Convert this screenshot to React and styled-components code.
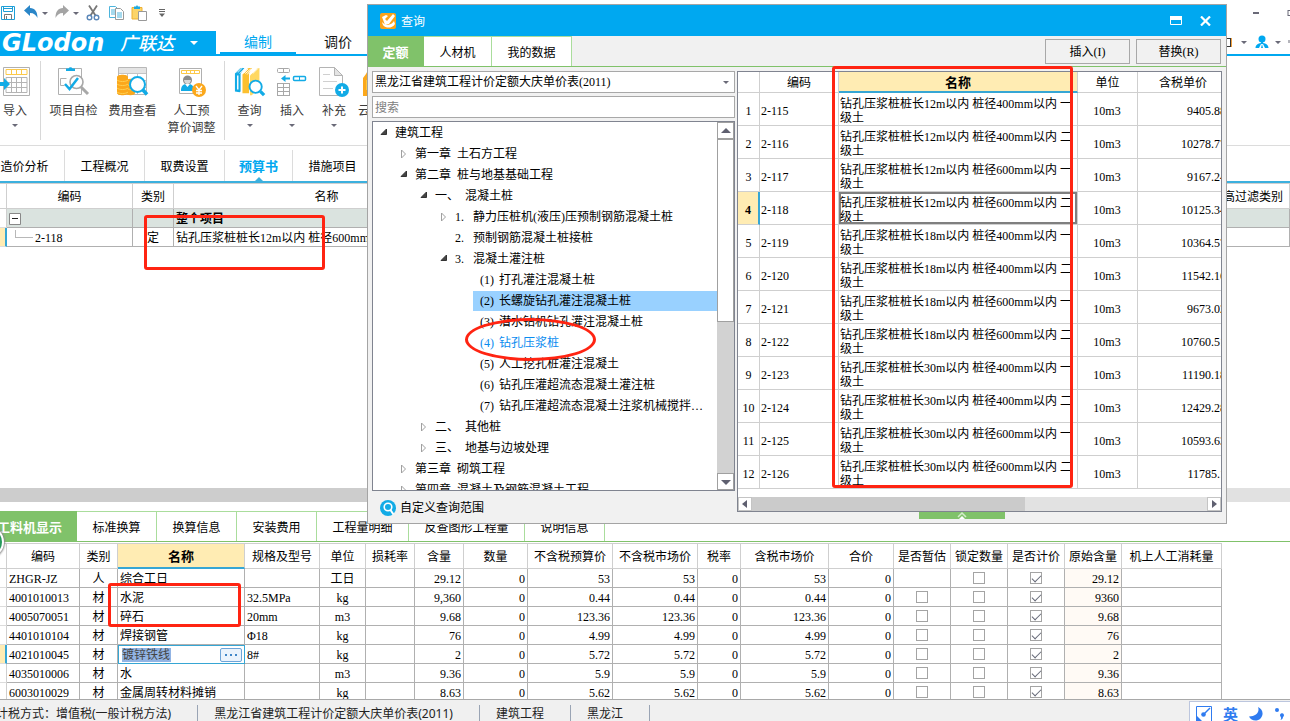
import React from 'react';
import styled, { createGlobalStyle, css } from 'styled-components';

const SONG = '"Liberation Serif", "Noto Sans CJK SC", serif';
const HEI = '"Noto Sans", "Noto Sans CJK SC", sans-serif';

const BLUE = '#00a8f0';
const GREEN = '#80c26a';

const docTabs = [
  { label: '造价分析', width: 80 },
  { label: '工程概况', width: 80 },
  { label: '取费设置', width: 80 },
  { label: '预算书', width: 68, active: true },
  { label: '措施项目', width: 80 },
];

const detailTabs = [
  { label: '工料机显示', width: 94, active: true },
  { label: '标准换算', width: 80 },
  { label: '换算信息', width: 80 },
  { label: '安装费用', width: 80 },
  { label: '工程量明细', width: 92 },
  { label: '反查图形工程量', width: 116 },
  { label: '说明信息', width: 80 },
];

const detailColumns = [
  { label: '', width: 7 },
  { label: '编码', width: 73 },
  { label: '类别', width: 38 },
  { label: '名称', width: 127, active: true },
  { label: '规格及型号', width: 75 },
  { label: '单位', width: 46 },
  { label: '损耗率', width: 49 },
  { label: '含量', width: 49 },
  { label: '数量', width: 64 },
  { label: '不含税预算价', width: 85 },
  { label: '不含税市场价', width: 85 },
  { label: '税率', width: 43 },
  { label: '含税市场价', width: 88 },
  { label: '合价', width: 65 },
  { label: '是否暂估', width: 57 },
  { label: '锁定数量', width: 57 },
  { label: '是否计价', width: 57 },
  { label: '原始含量', width: 57 },
  { label: '机上人工消耗量', width: 100 },
];

const materials = [
  { code: 'ZHGR-JZ', type: '人', name: '综合工日', spec: '', unit: '工日', amount: '29.12', price: '53', origin: '29.12', noEstimate: true },
  { code: '4001010013', type: '材', name: '水泥', spec: '32.5MPa', unit: 'kg', amount: '9,360', price: '0.44', origin: '9360' },
  { code: '4005070051', type: '材', name: '碎石', spec: '20mm', unit: 'm3', amount: '9.68', price: '123.36', origin: '9.68' },
  { code: '4401010104', type: '材', name: '焊接钢管', spec: 'Φ18', unit: 'kg', amount: '76', price: '4.99', origin: '76' },
  { code: '4021010045', type: '材', name: '镀锌铁线', spec: '8#', unit: 'kg', amount: '2', price: '5.72', origin: '2', editing: true },
  { code: '4035010006', type: '材', name: '水', spec: '', unit: 'm3', amount: '9.36', price: '5.9', origin: '9.36' },
  { code: '6003010029', type: '材', name: '金属周转材料摊销', spec: '', unit: 'kg', amount: '8.63', price: '5.62', origin: '8.63' },
];

const tree = [
  { level: 0, state: 'open', label: '建筑工程' },
  { level: 1, state: 'closed', no: '第一章', label: '土石方工程' },
  { level: 1, state: 'open', no: '第二章', label: '桩与地基基础工程' },
  { level: 2, state: 'open', no: '一、', label: '混凝土桩' },
  { level: 3, state: 'closed', no: '1.', label: '静力压桩机(液压)压预制钢筋混凝土桩' },
  { level: 3, no: '2.', label: '预制钢筋混凝土桩接桩' },
  { level: 3, state: 'open', no: '3.', label: '混凝土灌注桩' },
  { level: 4, no: '(1)', label: '打孔灌注混凝土桩' },
  { level: 4, no: '(2)', label: '长螺旋钻孔灌注混凝土桩', selected: true },
  { level: 4, no: '(3)', label: '潜水钻机钻孔灌注混凝土桩' },
  { level: 4, no: '(4)', label: '钻孔压浆桩', current: true },
  { level: 4, no: '(5)', label: '人工挖孔桩灌注混凝土' },
  { level: 4, no: '(6)', label: '钻孔压灌超流态混凝土灌注桩' },
  { level: 4, no: '(7)', label: '钻孔压灌超流态混凝土注浆机械搅拌…' },
  { level: 2, state: 'closed', no: '二、', label: '其他桩' },
  { level: 2, state: 'closed', no: '三、', label: '地基与边坡处理' },
  { level: 1, state: 'closed', no: '第三章', label: '砌筑工程' },
  { level: 1, state: 'closed', no: '第四章', label: '混凝土及钢筋混凝土工程' },
];

const noWidths = [0, 42, 30, 18, 24];

const quotas = [
  ['2-115', 12, 400, '一', '9405.88'],
  ['2-116', 12, 400, '二', '10278.77'],
  ['2-117', 12, 600, '一', '9167.24'],
  ['2-118', 12, 600, '二', '10125.34'],
  ['2-119', 18, 400, '一', '10364.57'],
  ['2-120', 18, 400, '二', '11542.16'],
  ['2-121', 18, 600, '一', '9673.02'],
  ['2-122', 18, 600, '二', '10760.51'],
  ['2-123', 30, 400, '一', '11190.18'],
  ['2-124', 30, 400, '二', '12429.28'],
  ['2-125', 30, 600, '一', '10593.63'],
  ['2-126', 30, 600, '二', '11785.1'],
];

const App = () => (
  <Window>
    <GlobalStyle />
    <QuickBar />
    <BrandBar />
    <Ribbon />
    <DocTabs>
      {docTabs.map(({ label, width, active }) => (
        <DocTab key={label} $width={width} $active={active}>
          {label}
        </DocTab>
      ))}
    </DocTabs>
    <BudgetGrid />
    <HScroll>
      <HScrollThumb />
    </HScroll>
    <DetailTabs>
      {detailTabs.map(({ label, width, active }) => (
        <DetailTab key={label} $width={width} $active={active}>
          {label}
        </DetailTab>
      ))}
    </DetailTabs>
    <MaterialGrid />
    <StatusBar />
    <FloatBall />
    <QueryDialog />
    <MarkBox $left={144} $top={215} $width={181} $height={55} />
    <MarkBox $left={832} $top={66} $width={241} $height={422} />
    <MarkBox $left={108} $top={583} $width={133} $height={44} />
    <MarkRing />
  </Window>
);

export default App;

const QuickBar = () => (
  <QuickBarWrap>
    <QuickTools>
      <IconButton aria-label="保存">
        <svg width="16" height="16" viewBox="0 0 16 16" fill="none" stroke="#1e9fd8">
          <path d="M1.5 1.5h13v13h-13z" />
          <path d="M3.5 1.5v5h9v-5M3.5 3.5h9" />
          <path d="M4.5 14.5v-5h7v5" stroke="#777" />
          <path d="M6.5 11v3" stroke="#777" />
        </svg>
      </IconButton>
      <ToolGroup>
        <IconButton aria-label="撤销">
          <svg width="16" height="16" viewBox="0 0 16 16">
            <path d="M1 5.500 L7 0v3c5 .2 7.500 3.500 7.500 10-1.500-3-3.500-5-7.500-5V11z" fill="#2a86c8" />
          </svg>
        </IconButton>
        <CaretButton aria-label="撤销列表"><Caret /></CaretButton>
      </ToolGroup>
      <ToolGroup>
        <IconButton aria-label="恢复">
          <svg width="16" height="16" viewBox="0 0 16 16">
            <path d="M15 5.500 L9 0v3c-5 .2-7.500 3.500-7.500 10 1.500-3 3.500-5 7.500-5V11z" fill="#a4a4a4" />
          </svg>
        </IconButton>
        <CaretButton aria-label="恢复列表"><Caret /></CaretButton>
      </ToolGroup>
      <IconButton aria-label="剪切">
        <svg width="16" height="16" viewBox="0 0 16 16" fill="none">
          <path d="M4 .5 10.500 10.500M12 .5 5.500 10.500" stroke="#777" strokeWidth="1.800" />
          <circle cx="4.500" cy="12.500" r="2.300" stroke="#5a86b8" strokeWidth="1.400" />
          <circle cx="11.500" cy="12.500" r="2.300" stroke="#5a86b8" strokeWidth="1.400" />
        </svg>
      </IconButton>
      <IconButton aria-label="复制">
        <svg width="16" height="16" viewBox="0 0 16 16" fill="#fff">
          <path d="M1.500 1.500h6l2 2v9h-8z" stroke="#4db4dc" />
          <path d="M3 5h4M3 7h4M3 9h4" stroke="#4db4dc" />
          <path d="M7.500 3.500h5l3 3v8h-8z" stroke="#999" />
          <path d="M9 8h5M9 10h5M9 12h5" stroke="#4db4dc" />
        </svg>
      </IconButton>
      <IconButton aria-label="粘贴">
        <svg width="16" height="16" viewBox="0 0 16 16">
          <path d="M1 2.500h10V14H1z" fill="#fcd468" stroke="#eeb032" />
          <path d="M3 1.500h2L6 0l1 1.500h2V4H3z" fill="#1ea9e0" />
          <path d="M7.500 6.500h8v9h-8z" fill="#fff" stroke="#999" />
        </svg>
      </IconButton>
      <IconButton aria-label="更多">
        <svg width="6" height="8" viewBox="0 0 6 8">
          <path d="M0 .5h6M0 2.500h6" stroke="#666" />
          <path d="M0 4.500h6L3 8z" fill="#666" />
        </svg>
      </IconButton>
    </QuickTools>
    <WindowTools>
      <svg width="38" height="10" viewBox="0 0 38 10" fill="none" stroke="#6a6a78">
        <path d="M1 4h6" strokeWidth="2" />
        <path d="M36 1v6M36 1.500h2M36 6.500h2" />
      </svg>
    </WindowTools>
  </QuickBarWrap>
);

const BrandBar = () => (
  <BrandBarWrap>
    <Brand>
      <BrandLatin>GLodon</BrandLatin>
      <BrandName>广联达</BrandName>
      <Caret $color="#fff" $size={4} />
    </Brand>
    <RibbonTab $active>编制</RibbonTab>
    <RibbonTab>调价</RibbonTab>
    <BrandRight>
      <svg width="64" height="16" viewBox="0 0 64 16">
        <path d="M0 3.500h4M0 11.500h4M4.500 3v9" fill="none" stroke="#333" />
        <path d="M5.500 3v9" stroke="#f0a040" />
        <path d="M15 6h6l-3 3zM49 6h6l-3 3z" fill="#6a6a78" />
        <circle cx="36" cy="4" r="3.500" fill={BLUE} />
        <path d="M35 6h2v2c3 .5 5.500 2 5.500 5H39l-2-4h-2l-2 4h-3.500c0-3 2.500-4.500 5.500-5z" fill={BLUE} />
        <path d="M36 9l1 4h-2z" fill={BLUE} />
        <path d="M63 5v3" stroke="#6a6a78" />
      </svg>
    </BrandRight>
  </BrandBarWrap>
);

const Ribbon = () => (
  <RibbonWrap>
    <RibbonGroup $first>
      <RibbonButton $width={50}>
        <ImportIcon />
        导入
        <Caret />
      </RibbonButton>
    </RibbonGroup>
    <RibbonGroup>
      <RibbonButton $width={59}>
        <CheckIcon />
        项目自检
      </RibbonButton>
      <RibbonButton $width={59}>
        <FeeIcon />
        费用查看
      </RibbonButton>
      <RibbonButton $width={59}>
        <LaborIcon />
        人工预
        <br />
        算价调整
      </RibbonButton>
    </RibbonGroup>
    <RibbonGroup>
      <RibbonButton $width={43}>
        <BooksIcon />
        查询
        <Caret />
      </RibbonButton>
      <RibbonButton $width={42}>
        <InsertIcon />
        插入
        <Caret />
      </RibbonButton>
      <RibbonButton $width={42}>
        <SupplementIcon />
        补充
        <Caret />
      </RibbonButton>
      <RibbonButton $width={42}>
        <CloudIcon />
        云检查
      </RibbonButton>
    </RibbonGroup>
  </RibbonWrap>
);

const ImportIcon = () => (
  <svg width="32" height="32" viewBox="0 0 32 32" fill="none">
    <path d="M4.500 1.500h26v28h-26z" stroke="#b0b0b0" />
    <path d="M7 3.500h21v5H7zM12.500 3v6M17.500 3v6M22.500 3v6" stroke="#fcc94a" />
    <path d="M7 11.500h21v15H7zM7 16.500h21M7 21.500h21M12.500 11v16M17.500 11v16M22.500 11v16" stroke="#b4b4b4" />
    <path d="M0 16h5v-4l6 6-6 6v-4H0z" fill="#12abe6" />
  </svg>
);

const CheckIcon = () => (
  <svg width="32" height="32" viewBox="0 0 32 32" fill="none">
    <path d="M.5 2.500h23v26H.5z" stroke="#b0b0b0" />
    <path d="M8 5V2.500h2.500a2.200 2.200 0 0 1 4 0H17V5z" fill="#12abe6" />
    <path d="M8.500 12.500h-6v7h4" stroke="#b0b0b0" />
    <circle cx="18.500" cy="16" r="6.500" fill="#fff" stroke="#a8a8a8" strokeWidth="1.600" />
    <path d="M23 21l7 7" stroke="#a8a8a8" strokeWidth="3" />
    <path d="M7 18l4.500 5L20 12" stroke="#12abe6" strokeWidth="2.500" />
  </svg>
);

const FeeIcon = () => (
  <svg width="32" height="32" viewBox="0 0 32 32" fill="none">
    <path d="M1.500 1.500h28v27h-28z" fill="#fff" stroke="#b8b8b8" />
    <path d="M2 2h27v5H2z" fill="#e4e4e4" />
    <path d="M2 7.500h27M10.500 7v21M20.500 7v21M2 14.500h27M2 21.500h27" stroke="#c4c4c4" />
    <path d="M0 11c0-3 11-3 11 0v16c0 3-11 3-11 0z" fill="#fba81c" />
    <path d="M9 15c0-3 9-3 9 0v12c0 3-9 3-9 0z" fill="#fba81c" />
    <path d="M0 14c2 2 9 2 11 0M0 18c2 2 9 2 11 0M0 22c2 2 9 2 11 0M0 26c2 2 9 2 11 0M11 19c2 1 4 1 6 0M11 23c2 1 4 1 6 0" stroke="#ffd050" />
    <circle cx="20.500" cy="18.500" r="7.500" fill="#fff" stroke="#12abe6" strokeWidth="2" />
    <path d="M26 24l4 4.500" stroke="#12abe6" strokeWidth="3.500" />
  </svg>
);

const LaborIcon = () => (
  <svg width="32" height="32" viewBox="0 0 32 32" fill="none">
    <path d="M3.500 2.500h22v25h-22z" fill="#fff" stroke="#b0b0b0" />
    <path d="M5.500 4.500h18v3h-18zM10.500 4v4M14.500 4v4M18.500 4v4" stroke="#fcc94a" />
    <path d="M7 14c0-6 9-6 9 0 0 2-1 3-2 4H9c-1-1-2-2-2-4z" fill="#8c8c8c" />
    <path d="M8 14h7c-.5 3-2 4-3.500 4S8.500 17 8 14z" fill="#d8d8d8" />
    <path d="M5 25c0-5 2-6 4-7l2.500 3 2.500-3c2 1 4 2 4 7z" fill="#12abe6" />
    <circle cx="23" cy="24" r="7" fill="#fba81c" />
    <path d="M20 20l3 4 3-4M20 24.500h6M20 27h6M23 24v5" stroke="#fff" strokeWidth="1.300" />
  </svg>
);

const BooksIcon = () => (
  <svg width="34" height="34" viewBox="0 0 34 34" fill="none">
    <path d="M1 8l6-6h4L7 8v19l-1 1-5-1z" fill="#12abe6" />
    <path d="M4 10v15" stroke="#fff" strokeWidth="1.500" />
    <path d="M2 7l5-5M4 7l5-5M6 8l5-5" stroke="#d8eef8" />
    <path d="M9 9l6-7h4l-3 6v21H9z" fill="#fcc030" />
    <path d="M10 8l5-5M12 8l6-5M14 9l5-6" stroke="#fff" />
    <path d="M17 10l7-7 3-1v20l-8 9h-2z" fill="#ffd862" />
    <path d="M18 8l6-5M20 8l5-5" stroke="#fff" />
    <circle cx="23" cy="22" r="6.500" fill="#fff" stroke="#12abe6" strokeWidth="2" />
    <path d="M28 27l4 4" stroke="#12abe6" strokeWidth="3.500" />
  </svg>
);

const InsertIcon = () => (
  <svg width="32" height="32" viewBox="0 0 32 32" fill="none">
    <rect x="1.500" y="2.500" width="12" height="4" rx="1" stroke="#a8a8a8" />
    <path d="M7.500 2v5" stroke="#a8a8a8" />
    <rect x="17.500" y="10.500" width="12" height="4" rx="1" stroke="#12abe6" strokeWidth="1.500" />
    <path d="M23.500 10v5" stroke="#12abe6" />
    <path d="M14 11.500H9.500V9L5 12.500 9.500 16v-2.500H14z" fill="#12abe6" />
    <rect x="1.500" y="17.500" width="12" height="12" stroke="#a8a8a8" />
    <path d="M7.500 17v13M1 21.500h13M1 25.500h13" stroke="#a8a8a8" />
  </svg>
);

const SupplementIcon = () => (
  <svg width="32" height="32" viewBox="0 0 32 32" fill="none">
    <path d="M1.500 1.500h15l8 8v20h-23z" fill="#fff" stroke="#b4b4b4" />
    <path d="M16.500 1.500v8h8z" fill="#e4e4e4" stroke="#b4b4b4" />
    <path d="M5 8.500h7M5 15.500h14M5 22.500h10" stroke="#d0d0d0" />
    <circle cx="24" cy="24" r="7" fill="#12abe6" />
    <path d="M20.500 24h7M24 20.500v7" stroke="#fff" strokeWidth="2" />
  </svg>
);

const CloudIcon = () => (
  <svg width="32" height="32" viewBox="0 0 32 32">
    <path d="M3 30V12l3-4 3-6h16v28z" fill="#fba81c" />
    <path d="M6 14h18v10H6z" fill="#ffc93c" />
  </svg>
);

const BudgetGrid = () => (
  <BudgetWrap>
    <BudgetTable>
      <colgroup>
        <Col $width={7} />
        <Col $width={126} />
        <Col $width={41} />
        <Col $width={306} />
        <col />
        <Col $width={73} />
      </colgroup>
      <thead>
        <tr>
          <HeadCell />
          <HeadCell>编码</HeadCell>
          <HeadCell>类别</HeadCell>
          <HeadCell>名称</HeadCell>
          <HeadCell />
          <HeadCell>高过滤类别</HeadCell>
        </tr>
      </thead>
      <tbody>
        <BudgetRow $summary>
          <IndicatorCell />
          <GridCell>
            <Expander aria-label="折叠">
              <svg width="12" height="12" viewBox="0 0 12 12" fill="#fff">
                <path d="M.5.500h11v11H.5z" stroke="#888" />
                <path d="M3 5.500h6" stroke="#222" />
              </svg>
            </Expander>
          </GridCell>
          <GridCell />
          <GridCell>整个项目</GridCell>
          <GridCell />
          <GridCell />
        </BudgetRow>
        <BudgetRow>
          <IndicatorCell $active />
          <GridCell>
            <TreeLine />
            2-118
          </GridCell>
          <GridCell $align="center">定</GridCell>
          <GridCell>钻孔压浆桩桩长12m以内 桩径600mm以内 二级土</GridCell>
          <GridCell />
          <GridCell />
        </BudgetRow>
      </tbody>
    </BudgetTable>
  </BudgetWrap>
);

const MaterialGrid = () => (
  <MaterialWrap>
    <MaterialTable>
      <colgroup>
        {detailColumns.map(({ label, width }) => (
          <Col key={label} $width={width} />
        ))}
      </colgroup>
      <thead>
        <tr>
          {detailColumns.map(({ label, active }) => (
            <HeadCell key={label} $active={active}>
              {label}
            </HeadCell>
          ))}
        </tr>
      </thead>
      <tbody>
        {materials.map((item) => (
          <MaterialRow key={item.code} item={item} />
        ))}
      </tbody>
    </MaterialTable>
  </MaterialWrap>
);

const MaterialRow = ({ item }) => (
  <tr>
    <IndicatorCell $active={item.editing} />
    <GridCell>{item.code}</GridCell>
    <GridCell $align="center">{item.type}</GridCell>
    {item.editing ? (
      <EditingCell>
        <Editor>
          <NameInput aria-label="名称" defaultValue={item.name} />
          <MoreButton aria-label="选择材料">
            <svg width="12" height="2" viewBox="0 0 12 2" fill="#3f86c8">
              <path d="M0 0h2v2H0zM5 0h2v2H5zM10 0h2v2h-2z" />
            </svg>
          </MoreButton>
        </Editor>
      </EditingCell>
    ) : (
      <GridCell>{item.name}</GridCell>
    )}
    <GridCell>{item.spec}</GridCell>
    <GridCell $align="center">{item.unit}</GridCell>
    <GridCell />
    <GridCell $align="right">{item.amount}</GridCell>
    <GridCell $align="right">0</GridCell>
    <GridCell $align="right">{item.price}</GridCell>
    <GridCell $align="right">{item.price}</GridCell>
    <GridCell $align="right">0</GridCell>
    <GridCell $align="right">{item.price}</GridCell>
    <GridCell $align="right">0</GridCell>
    <CheckCell>{!item.noEstimate && <CheckBox aria-label="是否暂估" />}</CheckCell>
    <CheckCell>
      <CheckBox aria-label="锁定数量" />
    </CheckCell>
    <CheckCell>
      <CheckBox aria-label="是否计价" defaultChecked />
    </CheckCell>
    <GridCell $align="right" $tinted>{item.origin}</GridCell>
    <GridCell />
  </tr>
);

const StatusBar = () => (
  <StatusWrap>
    <StatusItem>计税方式：增值税(一般计税方法)</StatusItem>
    <StatusItem>黑龙江省建筑工程计价定额大庆单价表(2011)</StatusItem>
    <StatusItem>建筑工程</StatusItem>
    <StatusItem>黑龙江</StatusItem>
    <ImeBar>
      <svg width="16" height="16" viewBox="0 0 16 16" fill="none">
        <path d="M.5.500h15v15H.5z" stroke="#2f7bf0" />
        <path d="M0 9l7 7H0z" fill="#2f7bf0" />
        <path d="M14 2L8 8" stroke="#2f7bf0" strokeWidth="1.500" />
        <circle cx="7.500" cy="8.500" r="2.300" fill="#2f7bf0" />
      </svg>
      <span>英</span>
      <svg width="14" height="14" viewBox="0 0 14 14" fill="#2f7bf0">
        <path d="M9 0c2 5-2 9.500-9 9.500C2 14 8 15 11.500 11.500S14 2 9 0z" />
      </svg>
      <svg width="12" height="14" viewBox="0 0 12 14" fill="#2f7bf0">
        <circle cx="3" cy="3" r="2" />
        <path d="M6 8.500a2 2 0 1 1 3 1.500c0 1.500-1 2.500-2.500 3l.7-2z" />
      </svg>
    </ImeBar>
  </StatusWrap>
);

const QueryDialog = () => (
  <Dialog role="dialog" aria-label="查询">
    <DialogTitle>
      <svg width="16" height="16" viewBox="0 0 16 16">
        <rect width="16" height="16" rx="2" fill="#fba31a" />
        <path d="M2 4l4-2 2 1-3 3 2 2 6-7 2 2-6 8-4 1z" fill="#fff" />
        <path d="M2 9c2 2 3 3 6 3 3-1 5-2 6-4l1 3c-2 3-5 4-8 3.500C4 14 2.500 12 2 9z" fill="#fff" />
      </svg>
      <DialogName>查询</DialogName>
      <TitleButton aria-label="最大化">
        <svg width="12" height="9" viewBox="0 0 12 9">
          <path d="M.5 1v7.500h11V1" fill="none" stroke="#fff" />
          <path d="M0 0h12v4H0z" fill="#fff" />
        </svg>
      </TitleButton>
      <TitleButton aria-label="关闭">
        <svg width="11" height="10" viewBox="0 0 11 10">
          <path d="M1 .5l9 9M10 .5l-9 9" stroke="#fff" strokeWidth="2.200" />
        </svg>
      </TitleButton>
    </DialogTitle>
    <DialogTabs>
      <DialogTab $width={56} $active>定额</DialogTab>
      <DialogTab $width={68}>人材机</DialogTab>
      <DialogTab $width={80}>我的数据</DialogTab>
      <DialogActions>
        <ActionButton>插入(I)</ActionButton>
        <ActionButton>替换(R)</ActionButton>
      </DialogActions>
    </DialogTabs>
    <DialogBody>
      <LeftPane>
        <SelectWrap>
          <QuotaSelect aria-label="定额库">
            <option>黑龙江省建筑工程计价定额大庆单价表(2011)</option>
          </QuotaSelect>
          <SelectCaret>
            <Caret />
          </SelectCaret>
        </SelectWrap>
        <SearchInput aria-label="搜索" placeholder="搜索" />
        <TreePanel>
          <TreeList>
            {tree.map(({ level, state, no, label, selected, current }) => (
              <TreeItem key={label} $level={level}>
                <TreeArrow>
                  {state === 'open' && (
                    <svg width="8" height="8" viewBox="0 0 8 8">
                      <path d="M6.500 1v5.500H1z" fill="#444" stroke="#333" />
                    </svg>
                  )}
                  {state === 'closed' && (
                    <svg width="8" height="10" viewBox="0 0 8 10">
                      <path d="M1.500 1v8l4-4z" fill="#fff" stroke="#a0a0a0" />
                    </svg>
                  )}
                </TreeArrow>
                <TreeLabel $selected={selected} $current={current}>
                  {no && <TreeNo $width={noWidths[level]} $center={level === 4}>{no}</TreeNo>}
                  {label}
                </TreeLabel>
              </TreeItem>
            ))}
          </TreeList>
          <VScroll>
            <ScrollButton aria-label="向上">
              <svg width="10" height="6" viewBox="0 0 10 6" fill="#5f6070">
                <path d="M5 0l5 5H0z" />
              </svg>
            </ScrollButton>
            <VScrollThumb />
            <ScrollButton aria-label="向下">
              <svg width="10" height="6" viewBox="0 0 10 6" fill="#5f6070">
                <path d="M5 6l5-5H0z" />
              </svg>
            </ScrollButton>
          </VScroll>
        </TreePanel>
        <RangeButton>
          <svg width="16" height="16" viewBox="0 0 16 16" fill="none">
            <circle cx="8" cy="8" r="8" fill="#12abe6" />
            <circle cx="8" cy="7" r="3.800" stroke="#fff" strokeWidth="1.600" />
            <path d="M10.500 10l3 4.500" stroke="#fff" strokeWidth="2" />
          </svg>
          自定义查询范围
        </RangeButton>
      </LeftPane>
      <RightPane>
        <QuotaPanel>
          <QuotaTable>
            <colgroup>
              <Col $width={22} />
              <Col $width={79} />
              <col />
              <Col $width={60} />
              <Col $width={91} />
            </colgroup>
            <thead>
              <tr>
                <QuotaHead />
                <QuotaHead>编码</QuotaHead>
                <QuotaHead $active>名称</QuotaHead>
                <QuotaHead>单位</QuotaHead>
                <QuotaHead>含税单价</QuotaHead>
              </tr>
            </thead>
            <tbody>
              {quotas.map(([code, length, diameter, soil, price], i) => (
                <tr key={code}>
                  <QuotaIndex $active={i === 3}>{i + 1}</QuotaIndex>
                  <QuotaCell>{code}</QuotaCell>
                  <QuotaCell $focused={i === 3}>
                    钻孔压浆桩桩长{length}m以内 桩径{diameter}mm以内 {soil}级土
                  </QuotaCell>
                  <QuotaCell $align="center">10m3</QuotaCell>
                  <QuotaCell $align="right">{price}</QuotaCell>
                </tr>
              ))}
            </tbody>
          </QuotaTable>
          <QuotaScroll>
            <SideButton aria-label="向左">
              <svg width="6" height="8" viewBox="0 0 6 8" fill="#5f6070">
                <path d="M0 4l5-4v8z" />
              </svg>
            </SideButton>
            <QuotaTrack>
              <QuotaThumb />
            </QuotaTrack>
            <SideButton aria-label="向右">
              <svg width="6" height="8" viewBox="0 0 6 8" fill="#5f6070">
                <path d="M6 4L1 0v8z" />
              </svg>
            </SideButton>
          </QuotaScroll>
        </QuotaPanel>
        <CollapseButton aria-label="展开">
          <svg width="10" height="7" viewBox="0 0 10 7" fill="none">
            <path d="M1 5l4-4 4 4" stroke="#d4ecca" strokeWidth="1.500" />
            <path d="M2 7l3-3 3 3z" fill="#fff" />
          </svg>
        </CollapseButton>
      </RightPane>
    </DialogBody>
  </Dialog>
);

const GlobalStyle = createGlobalStyle`
  * {
    box-sizing: border-box;
  }
  body {
    margin: 0;
    background: #fff;
    color: #000;
    font: 12px/18px ${SONG};
  }
  button,
  input,
  select {
    margin: 0;
    padding: 0;
    border: 0;
    border-radius: 0;
    background: none;
    color: inherit;
    font: inherit;
    outline: 0;
  }
  svg {
    display: block;
    flex: none;
  }
`;

const Window = styled.div`
  position: relative;
  display: flex;
  flex-direction: column;
  height: 100vh;
  overflow: hidden;
`;

const Caret = styled.i`
  display: block;
  border: ${({ $size = 3 }) => $size}px solid transparent;
  border-top-color: ${({ $color = '#6a6a78' }) => $color};
  border-bottom: 0;
`;

const Col = styled.col`
  width: ${({ $width }) => $width}px;
`;

/* title rows */

const QuickBarWrap = styled.header`
  display: flex;
  justify-content: space-between;
  flex: none;
  height: 31px;
  padding-top: 5px;
`;

const QuickTools = styled.div`
  display: flex;
  gap: 3px;
  height: 16px;
  margin-left: -2px;
`;

const ToolGroup = styled.div`
  display: flex;
`;

const IconButton = styled.button`
  display: flex;
  align-items: center;
  justify-content: center;
  width: 20px;
`;

const CaretButton = styled(IconButton)`
  width: 8px;
`;

const WindowTools = styled.div`
  padding-top: 4px;
`;

const BrandBarWrap = styled.nav`
  display: flex;
  flex: none;
  height: 25px;
  border-bottom: 2px solid ${BLUE};
`;

const Brand = styled.div`
  display: flex;
  align-items: center;
  width: 216px;
  padding-left: 2px;
  background: ${BLUE};
  color: #fff;
  white-space: nowrap;
`;

const BrandLatin = styled.span`
  width: 118px;
  padding-top: 2px;
  font: italic bold 24px/21px 'DejaVu Sans', sans-serif;
`;

const BrandName = styled.span`
  width: 70px;
  font: italic 500 18px/23px 'Noto Sans CJK SC', sans-serif;
`;

const RibbonTab = styled.button`
  width: 76px;
  margin-left: 4px;
  border-bottom: 2px solid ${({ $active }) => ($active ? BLUE : 'transparent')};
  color: ${({ $active }) => ($active ? BLUE : '#111')};
  font: 14px/20px ${HEI};
`;

const BrandRight = styled.div`
  margin-left: auto;
  padding-top: 4px;
`;

const RibbonWrap = styled.section`
  display: flex;
  flex: none;
  height: 90px;
  padding-top: 5px;
  border-bottom: 1px solid #dcdcdc;
  overflow: hidden;
`;

const RibbonGroup = styled.div`
  display: flex;
  height: 79px;
  ${({ $first }) =>
    $first
      ? css`
          margin-left: -10px;
        `
      : css`
          padding: 0 3px;
          border-left: 1px solid #d8d8d8;
        `}
`;

const RibbonButton = styled.button`
  display: flex;
  flex-direction: column;
  align-items: center;
  width: ${({ $width }) => $width}px;
  padding-top: 5px;
  color: #3c3c3c;
  font: 12px/17px ${HEI};
  white-space: nowrap;

  svg {
    height: 32px;
    margin-bottom: 4px;
  }

  ${Caret} {
    margin-top: 5px;
  }
`;

/* tab strips */

const DocTabs = styled.nav`
  display: flex;
  flex: none;
  height: 37px;
  margin-left: -15px;
  padding-top: 4px;
  border-bottom: 2px solid #3cb0de;
`;

const DocTab = styled.button`
  position: relative;
  width: ${({ $width }) => $width}px;
  padding-top: 2px;
  border-right: 1px solid #dcdcdc;

  ${({ $active }) =>
    $active &&
    css`
      color: ${BLUE};
      font-size: 13px;
      font-weight: bold;

      &::after {
        content: '';
        position: absolute;
        bottom: 0;
        left: 50%;
        margin-left: -4px;
        border: 4px solid transparent;
        border-top: 0;
        border-bottom-color: #3cb0de;
      }
    `}
`;

const DetailTabs = styled.nav`
  display: flex;
  flex: none;
  height: 31px;
  margin: 9px 0 1px -17px;
  border-bottom: 1px solid ${GREEN};
`;

const panelTab = css`
  width: ${({ $width }) => $width}px;
  padding-top: 2px;
  border: solid #aadd9c;
  border-width: 1px 1px 0 0;
  background: #fff;
  white-space: nowrap;

  ${({ $active }) =>
    $active &&
    css`
      border-color: ${GREEN};
      background: ${GREEN};
      color: #fff;
      font-size: 13px;
      font-weight: bold;
    `}
`;

const DetailTab = styled.button`
  ${panelTab}
`;

/* grids */

const gridTable = css`
  table-layout: fixed;
  border-collapse: separate;
  border-spacing: 0;
`;

const HeadCell = styled.th`
  height: 26px;
  padding: 2px 0 0;
  border: solid #cfcfcf;
  border-width: 1px 1px 1px 0;
  font-weight: normal;
  white-space: nowrap;

  ${({ $active }) =>
    $active &&
    css`
      border-bottom: 2px solid #36a6d4;
      background: #ffecb3;
      font-size: 13px;
      font-weight: bold;
    `}
`;

const GridCell = styled.td`
  height: 19px;
  padding: 2px 2px 0;
  border: solid #b0b0b0;
  border-width: 0 1px 1px 0;
  background: ${({ $tinted }) => ($tinted ? '#fffaf5' : 'none')};
  line-height: 16px;
  text-align: ${({ $align = 'left' }) => $align};
  white-space: nowrap;
`;

const CheckCell = styled(GridCell)`
  padding: 0;
`;

const IndicatorCell = styled.td`
  padding: 0;
  border-right: 1px solid #cfcfcf;
  border-bottom: 1px solid #dcdcdc;
  ${({ $active }) =>
    $active &&
    css`
      border-right: 2px solid #36a6d4;
      background: #ffecb3;
    `}
`;

const BudgetWrap = styled.main`
  flex: 1;
  min-height: 0;
  overflow: hidden;
`;

const BudgetTable = styled.table`
  ${gridTable}
  width: 100%;
`;

const BudgetRow = styled.tr`
  ${({ $summary }) =>
    $summary &&
    css`
      font-weight: bold;

      ${GridCell} {
        background: #dae3df;
      }
    `}
`;

const Expander = styled.button`
  display: block;
`;

const TreeLine = styled.span`
  display: inline-block;
  width: 18px;
  height: 8px;
  margin: 0 2px 0 6px;
  border: solid #b8b8b8;
  border-width: 0 0 1px 1px;
  vertical-align: 4px;
`;

const HScroll = styled.div`
  flex: none;
  height: 14px;
  background: #e1e1e1;
`;

const HScrollThumb = styled.div`
  width: 60%;
  height: 100%;
  background: #cdcdcd;
`;

const MaterialWrap = styled.section`
  flex: none;
  height: 157px;
  border-bottom: 1px solid #a8a8a8;
  overflow: hidden;
`;

const MaterialTable = styled.table`
  ${gridTable}
  width: 1222px;
`;

const EditingCell = styled.td`
  padding: 0;
  border: 1px solid #36a6d4;
`;

const Editor = styled.div`
  display: flex;
  align-items: center;
  justify-content: space-between;
  height: 16px;
  padding: 0 2px 0 3px;
`;

const NameInput = styled.input`
  width: 49px;
  height: 14px;
  background: #92b4e4;
  color: #444;
`;

const MoreButton = styled.button`
  display: flex;
  align-items: center;
  justify-content: center;
  width: 22px;
  height: 14px;
  border: 1px solid #6ea4d8;
  border-radius: 2px;
  background: #eaf3fc;
`;

const CheckBox = styled.input.attrs({ type: 'checkbox' })`
  position: relative;
  display: block;
  width: 12px;
  height: 12px;
  margin: 0 auto;
  border: 1px solid #a4a4a4;
  background: #fff;
  appearance: none;

  &:checked::after {
    content: '';
    position: absolute;
    top: 0;
    left: 3px;
    width: 4px;
    height: 8px;
    border: solid #666a78;
    border-width: 0 1px 1px 0;
    transform: rotate(45deg);
  }
`;

/* status bar */

const StatusWrap = styled.footer`
  display: flex;
  flex: none;
  align-items: flex-end;
  height: 21px;
  margin-left: -20px;
  background: #f0f0f0;
  color: #222;
  font: 12px/18px ${HEI};
  white-space: nowrap;
`;

const StatusItem = styled.span`
  height: 16px;
  padding: 0 26px 0 16px;
  border-right: 1px solid #9aa4b4;
`;

const ImeBar = styled.div`
  display: flex;
  align-items: center;
  gap: 11px;
  height: 20px;
  margin-left: auto;
  padding: 4px 4px 0 6px;
  border: solid #bcc6de;
  border-width: 1px 0 0 1px;
  background: #fff;
  color: #2f7bf0;
  font-size: 15px;
  font-weight: bold;
`;

const FloatBall = styled.div`
  position: absolute;
  top: 526px;
  left: -28px;
  width: 32px;
  height: 32px;
  border: 2px solid #fff;
  border-radius: 50%;
  background: #279a5c;
  box-shadow: 0 0 2px 1px #888;
`;

/* query dialog */

const Dialog = styled.div`
  position: absolute;
  top: 4px;
  right: 63px;
  left: 367px;
  border: 1px solid #a4a4a4;
  background: #f1f1f1;
`;

const DialogTitle = styled.header`
  display: flex;
  align-items: center;
  gap: 5px;
  height: 31px;
  padding: 0 9px 0 12px;
  background: ${BLUE};
  color: #fff;
`;

const DialogName = styled.h1`
  flex: 1;
  margin: 0;
  padding-top: 2px;
  font: 12px/18px ${HEI};
`;

const TitleButton = styled.button`
  display: flex;
  justify-content: center;
  width: 24px;
`;

const DialogTabs = styled.nav`
  display: flex;
  height: 31px;
  border-bottom: 1px solid ${GREEN};
`;

const DialogTab = styled.button`
  ${panelTab}
`;

const DialogActions = styled.div`
  display: flex;
  gap: 6px;
  margin-left: auto;
  padding: 3px 5px 2px 0;
`;

const ActionButton = styled.button`
  width: 85px;
  border: 1px solid #a8a8a8;
`;

const DialogBody = styled.div`
  display: flex;
  gap: 2px;
  padding: 4px 4px 0;
`;

const LeftPane = styled.div`
  display: flex;
  flex: none;
  flex-direction: column;
  gap: 3px;
  width: 363px;
`;

const SelectWrap = styled.div`
  position: relative;
  height: 22px;
  border: 1px solid #a8a8a8;
  background: #fff;
`;

const QuotaSelect = styled.select`
  width: 100%;
  height: 20px;
  padding-left: 2px;
  appearance: none;
`;

const SelectCaret = styled.span`
  position: absolute;
  top: 9px;
  right: 5px;
  pointer-events: none;
`;

const SearchInput = styled.input`
  height: 22px;
  padding: 2px 0 0 2px;
  border: 1px solid #a8a8a8;
  background: #fff;

  &::placeholder {
    color: #808080;
  }
`;

const TreePanel = styled.div`
  display: flex;
  height: 370px;
  border: 1px solid #808490;
  background: #fff;
`;

const TreeList = styled.ul`
  flex: 1;
  margin: 0;
  padding: 1px 0 0;
  list-style: none;
  overflow: hidden;
`;

const TreeItem = styled.li`
  display: flex;
  align-items: flex-start;
  height: 21px;
  padding-left: ${({ $level }) => 7 + $level * 20}px;
`;

const TreeArrow = styled.span`
  flex: none;
  width: 13px;
  padding-top: 5px;
`;

const TreeLabel = styled.span`
  flex: 1;
  display: flex;
  padding-left: 2px;
  background: ${({ $selected }) => ($selected ? '#99d1ff' : 'none')};
  color: ${({ $current }) => ($current ? '#0a8cf0' : 'inherit')};
  line-height: 20px;
  white-space: nowrap;
`;

const TreeNo = styled.span`
  width: ${({ $width }) => $width}px;
  text-align: ${({ $center }) => ($center ? 'center' : 'left')};
`;

const VScroll = styled.div`
  display: flex;
  flex-direction: column;
  justify-content: space-between;
  width: 17px;
  background: #d2d2d2;
`;

const ScrollButton = styled.button`
  display: flex;
  align-items: center;
  justify-content: center;
  height: 17px;
  border: 1px solid #a0a0a0;
  background: #fff;
`;

const VScrollThumb = styled.div`
  height: 183px;
  margin-bottom: auto;
  border: 1px solid #a0a0a0;
  background: #fff;
`;

const RangeButton = styled.button`
  display: flex;
  align-items: center;
  gap: 4px;
  height: 29px;
  padding: 0 8px 2px;
`;

const RightPane = styled.div`
  display: flex;
  flex: 1;
  flex-direction: column;
  min-width: 0;
  padding-bottom: 4px;
`;

const QuotaPanel = styled.div`
  display: flex;
  flex: 1;
  flex-direction: column;
  justify-content: space-between;
  border: 1px solid #808490;
  background: #fff;
  overflow: hidden;
`;

const QuotaTable = styled.table`
  ${gridTable}
  width: calc(100% + 8px);
`;

const QuotaHead = styled(HeadCell)`
  height: 21px;
  border-top: 0;
  line-height: 16px;
`;

const QuotaCell = styled.td`
  height: 33px;
  padding: 3px 2px 0 1px;
  border: solid #cfcfcf;
  border-width: 0 1px 1px 0;
  line-height: 14px;
  text-align: ${({ $align = 'left' }) => $align};
  box-shadow: ${({ $focused }) => ($focused ? 'inset 0 0 0 2px #7f7f7f' : 'none')};
`;

const QuotaIndex = styled(QuotaCell).attrs({ $align: 'center' })`
  padding: 3px 0 0;
  ${({ $active }) =>
    $active &&
    css`
      border-right: 2px solid #36a6d4;
      background: #ffecb3;
      font-weight: bold;
    `}
`;

const QuotaScroll = styled.div`
  display: flex;
  height: 14px;
`;

const SideButton = styled.button`
  display: flex;
  align-items: center;
  justify-content: center;
  width: 14px;
  border: 1px solid #c4c4c4;
`;

const QuotaTrack = styled.div`
  flex: 1;
  background: #e2e2e2;
`;

const QuotaThumb = styled.div`
  width: 60%;
  height: 100%;
  background: #cbcbcb;
`;

const CollapseButton = styled.button`
  display: flex;
  justify-content: center;
  align-self: center;
  width: 86px;
  height: 7px;
  margin-right: 36px;
  background: ${GREEN};
`;

/* red pen marks over the window */

const MarkBox = styled.div`
  position: absolute;
  top: ${({ $top }) => $top}px;
  left: ${({ $left }) => $left}px;
  width: ${({ $width }) => $width}px;
  height: ${({ $height }) => $height}px;
  border: 3px solid #ff2412;
  border-radius: 3px;
  pointer-events: none;
`;

const MarkRing = styled.div`
  position: absolute;
  top: 318px;
  left: 465px;
  width: 131px;
  height: 43px;
  border: 3px solid #ff2412;
  border-radius: 50%;
  pointer-events: none;
`;
